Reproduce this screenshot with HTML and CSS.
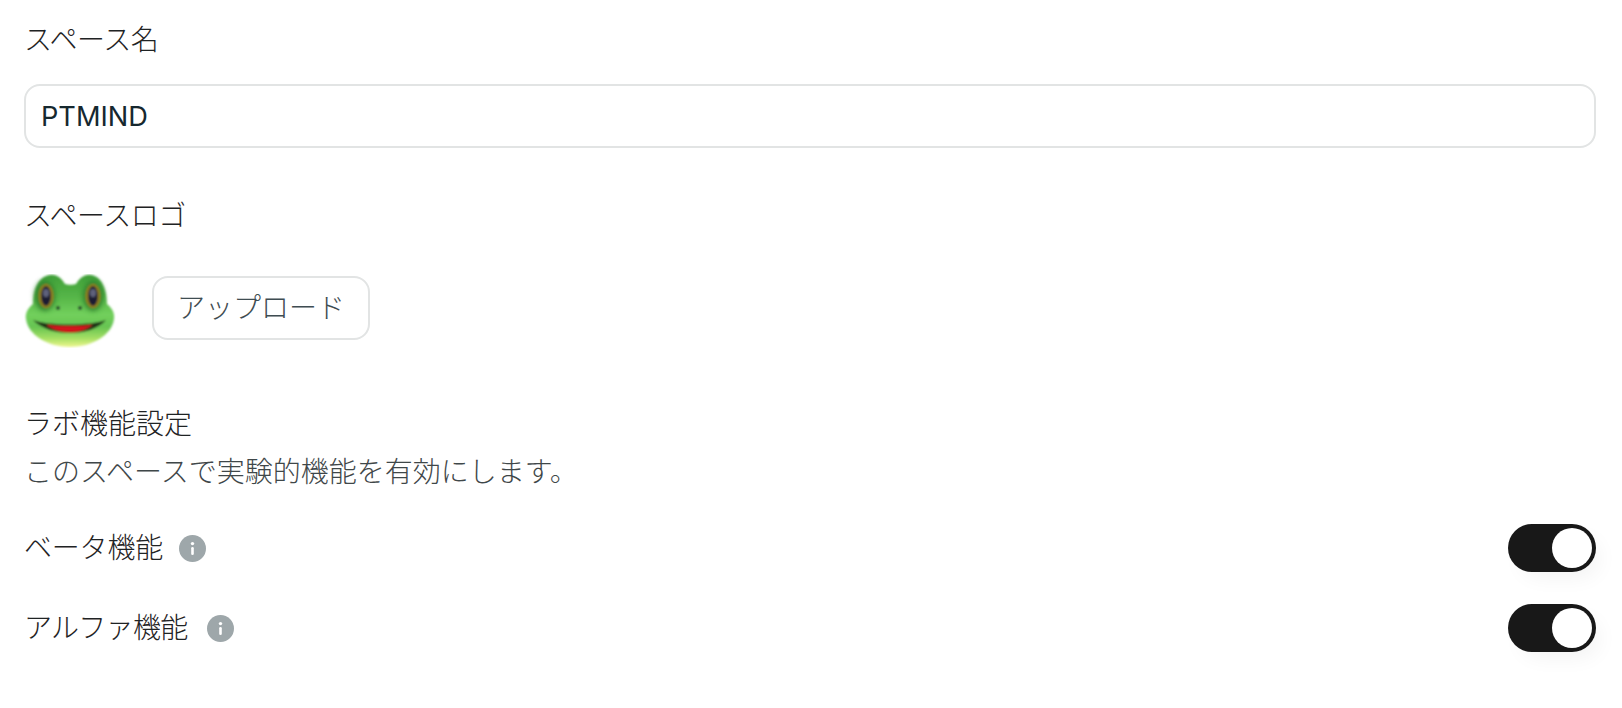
FILE: index.html
```html
<!DOCTYPE html>
<html lang="ja">
<head>
    <meta charset="UTF-8">
    <meta name="viewport" content="width=device-width, initial-scale=1.0">
    <title>スペース設定</title>
    <link rel="stylesheet" href="styles.css">
</head>
<body>
    <div class="container">
        <div class="label name-label">スペース名</div>
        <input type="text" class="name-input" value="PTMIND">

        <div class="label logo-label">スペースロゴ</div>
        <div class="logo-row">
            <svg class="frog" viewBox="0 0 92 74" aria-hidden="true">
                <defs>
                    <linearGradient id="frogBody" x1="0" y1="0" x2="0" y2="1">
                        <stop offset="0" stop-color="#3f9f38"/>
                        <stop offset="0.3" stop-color="#55b548"/>
                        <stop offset="0.55" stop-color="#72d05c"/>
                        <stop offset="0.72" stop-color="#66c452"/>
                        <stop offset="0.88" stop-color="#a6e064"/>
                        <stop offset="1" stop-color="#eef78e"/>
                    </linearGradient>
                    <filter id="soft" x="-5%" y="-5%" width="110%" height="110%">
                        <feGaussianBlur stdDeviation="0.9"/>
                    </filter>
                    <filter id="softer" x="-30%" y="-30%" width="160%" height="160%">
                        <feGaussianBlur stdDeviation="2.5"/>
                    </filter>
                </defs>
                <g filter="url(#soft)">
                    <path fill="url(#frogBody)" d="M9 30C9 14 15 2 26 1C33 0 38 5 41 10C44 11 49 11 52 10C55 5 60 0 67 1C77 2 83 14 83 30C88 34 91 39 90 45C88 61 68 73 46 73C24 73 4 61 2 45C1 39 4 34 9 30Z"/>
                    <ellipse cx="21" cy="22" rx="10" ry="15" fill="#2d7f2a" filter="url(#softer)"/>
                    <ellipse cx="69" cy="22" rx="10" ry="15" fill="#2d7f2a" filter="url(#softer)"/>
                    <ellipse cx="22" cy="22" rx="7.5" ry="12" fill="#94801f"/>
                    <ellipse cx="69" cy="22" rx="7.5" ry="12" fill="#94801f"/>
                    <ellipse cx="22" cy="22" rx="5" ry="10" fill="#1f1f33"/>
                    <ellipse cx="69" cy="22" rx="5" ry="10" fill="#1f1f33"/>
                    <ellipse cx="22" cy="19" rx="3" ry="4" fill="#5f627c"/>
                    <ellipse cx="69" cy="19" rx="3" ry="4" fill="#5f627c"/>
                    <circle cx="34" cy="34" r="2" fill="#24402a"/>
                    <circle cx="56" cy="34" r="2" fill="#24402a"/>
                    <path fill="#1c3312" d="M9 46C24 52 66 52 82 46C74 55 60 59 46 59C32 59 18 55 9 46Z"/>
                    <path fill="#d3141c" d="M22 50.5C36 52.5 54 52.5 69 50.5C62 56 54 58.5 46 58.5C38 58.5 29 56 22 50.5Z"/>
                </g>
            </svg>
            <button type="button" class="upload-btn">アップロード</button>
        </div>

        <div class="lab-title">ラボ機能設定</div>
        <div class="lab-desc">このスペースで実験的機能を有効にします。</div>

        <div class="feature-row beta">
            <div class="feature-name">
                <span class="feature-text">ベータ機能</span>
                <svg class="info" viewBox="0 0 27 27" aria-hidden="true">
                    <circle cx="13.5" cy="13.5" r="13.5" fill="#9ea7aa"/>
                    <circle cx="13.5" cy="8.6" r="1.7" fill="#fff"/>
                    <rect x="12.2" y="12" width="2.6" height="8" rx="1.3" fill="#fff"/>
                </svg>
            </div>
            <div class="switch"><div class="knob"></div></div>
        </div>
        <div class="feature-row alpha">
            <div class="feature-name">
                <span class="feature-text">アルファ機能</span>
                <svg class="info" viewBox="0 0 27 27" aria-hidden="true">
                    <circle cx="13.5" cy="13.5" r="13.5" fill="#9ea7aa"/>
                    <circle cx="13.5" cy="8.6" r="1.7" fill="#fff"/>
                    <rect x="12.2" y="12" width="2.6" height="8" rx="1.3" fill="#fff"/>
                </svg>
            </div>
            <div class="switch"><div class="knob"></div></div>
        </div>
    </div>
</body>
</html>
```

FILE: styles.css
```css
html, body {
    margin: 0;
    background: #fff;
    overflow: hidden;
}
body {
    height: 708px;
    font-family: "Noto Sans CJK JP", Inter, sans-serif;
    font-size: 28px;
    font-weight: 300;
    color: #1f2324;
}
.container {
    width: 1572px;
    margin-left: 24px;
}
.label {
    line-height: 40px;
    letter-spacing: -0.5px;
}
.name-label {
    padding-top: 18px;
}
.name-input {
    display: block;
    box-sizing: border-box;
    width: 100%;
    height: 64px;
    margin-top: 26px;
    padding: 0 15px;
    border: 2px solid #e2e4e4;
    border-radius: 16px;
    font-family: Inter, sans-serif;
    font-size: 27.2px;
    color: #16282f;
    outline: none;
}
.logo-label {
    margin-top: 46px;
}
.logo-row {
    display: flex;
    align-items: flex-start;
    margin-top: 40px;
}
.frog {
    width: 92px;
    height: 74px;
    flex: none;
}
.upload-btn {
    box-sizing: border-box;
    width: 218px;
    height: 64px;
    margin: 2px 0 0 36px;
    padding: 0 0 5px;
    background: #fff;
    border: 2px solid #e2e4e4;
    border-radius: 16px;
    font-family: "Noto Sans CJK JP", sans-serif;
    font-size: 28px;
    font-weight: 300;
    color: #3f4d52;
}
.lab-title {
    margin-top: 54px;
    line-height: 40px;
}
.lab-desc {
    margin-top: 8px;
    line-height: 40px;
    color: #3f4749;
}
.feature-row {
    display: flex;
    justify-content: space-between;
    align-items: center;
    height: 48px;
    margin-top: 32px;
}
.feature-row.beta {
    margin-top: 34px;
}
.feature-name {
    display: flex;
    align-items: center;
    gap: 16px;
}
.feature-text {
    padding-bottom: 4px;
    letter-spacing: -0.2px;
}
.alpha .feature-text {
    letter-spacing: -0.7px;
}
.alpha .feature-name {
    gap: 19px;
}
.info {
    width: 27px;
    height: 27px;
}
.switch {
    box-sizing: border-box;
    display: flex;
    justify-content: flex-end;
    align-items: center;
    width: 88px;
    height: 48px;
    padding-right: 4px;
    border-radius: 24px;
    background: #181818;
    box-shadow: 8px 10px 22px -6px rgba(0, 0, 0, 0.06);
}
.knob {
    width: 40px;
    height: 40px;
    border-radius: 50%;
    background: #fff;
}
```
